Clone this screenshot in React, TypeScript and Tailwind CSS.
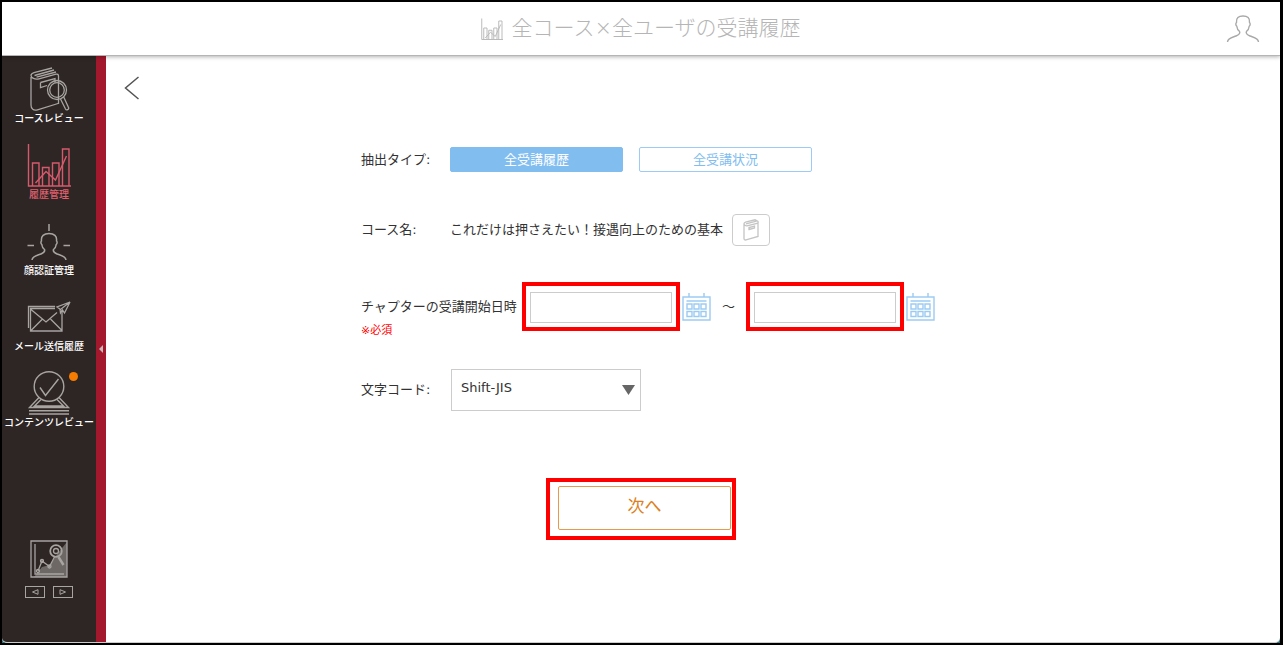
import { useState } from "react";

const CourseReviewIcon = () => (
  <svg width="44" height="44" viewBox="0 0 44 44" fill="none" stroke="#a8a4a2" strokeWidth="1.3">
    <path d="M4 10V38c0 4 2.500 6 6.500 4.800L31 36.500M31.500 9v28M31.500 9c0-1.500-1-2.200-2.500-1.800L12 11.800c-4 1-8-.8-8-3.300 0-1.500 1.500-2.300 3-2.800L25 1M7.500 8.500 27 3M9.500 10.200 29 5" />
    <path d="M13.500 15.500 28 11.500v4M13.500 15.500v5L20 18.500" />
    <circle cx="30" cy="23" r="9.500" />
    <circle cx="30" cy="23" r="7.300" />
    <path d="m33.500 32 5 10c1 1.800 3.800.6 3-1.500l-5-11" />
  </svg>
);

const ChartIcon = ({ size, color }: { size: number; color: string }) => (
  <svg width={size} height={size} viewBox="0 0 44 44" fill="none" stroke={color} strokeWidth={size > 30 ? 1.4 : 2}>
    <path d="M1.500 1v42H44M5.500 43V20h6.500v23M15.500 43V24.500h6.500V43M25.500 43V20h6.500v23M35.500 43V6H42v37" />
    <path d="m8.500 40 10.500-11.500 9.500 8.500L39.500 13" />
  </svg>
);

const FaceAuthIcon = () => (
  <svg width="44" height="44" viewBox="0 0 44 44" fill="none" stroke="#a8a4a2" strokeWidth="1.500">
    <path d="M22 5v7M.5 26.500H7M36.500 26.500H43" />
    <path d="M5 41c.5-4 5-4.500 9-6 3-1.200 4-3 3.500-4.500-1.500-1-2.500-3-2.700-5-1.300-1-1-3-.3-3.500-.7-5 2.500-7.500 7.500-7.500s8.200 2.500 7.500 7.500c.7.500 1 2.500-.3 3.500-.2 2-1.200 4-2.700 5-.5 1.500.5 3.300 3.500 4.500 4 1.500 8.500 2 9 6" />
  </svg>
);

const MailIcon = () => (
  <svg width="44" height="44" viewBox="0 0 44 44" fill="none" stroke="#a8a4a2" strokeWidth="1.300">
    <path d="M28 11.500H1.500V33M28 13.500H3.500V36H35V15M4 14.500l15 12.500 11-9.500M4 35.500l11.500-11.500M35 35.500 23.500 24" />
    <path d="M43 7 30 12l3.500 2.500L43 7l-5.500 11-2-3-2 3-.5-4" />
  </svg>
);

const ContentReviewIcon = () => (
  <svg width="44" height="44" viewBox="0 0 44 44" fill="none" stroke="#a8a4a2" strokeWidth="1.400">
    <circle cx="22" cy="15.500" r="14.800" />
    <path d="m13 16.500 5.500 8L31.500 8M12 26.500 2.500 36.500h39L32 26.500M14 28.500l-6.500 6.500h29L30 28.500M2 39.800h40M2 43h40" />
  </svg>
);

const UserIcon = () => (
  <svg width="34" height="28" viewBox="0 0 34 28" fill="none" stroke="#a9a9a9" strokeWidth="1.400">
    <path d="M1.500 27c.3-4 4.500-4.500 8.500-6 3-1.200 4.500-3 3.500-4.700-1.700-1-2.500-3-2.700-5-1.300-1-1.200-3-.3-3.800C10 3 12.500 1 17 1s7 2 6.500 6.500c.9.800 1 2.800-.3 3.800-.2 2-1 4-2.700 5-1 1.700.5 3.500 3.500 4.700 4 1.500 8.200 2 8.500 6" />
  </svg>
);

const ReportIcon = () => (
  <svg width="38" height="38" viewBox="0 0 38 38" fill="none" stroke="#a8a4a2" strokeWidth="1.300">
    <path d="M37 2v35H4L12 27l8-2 8-12z" fill="#6d6866" stroke="none" />
    <path d="M1 1h36v36H1z" />
    <path d="M5 4v30h29" />
    <path d="M8 31 12 21l7.500 5.500L25 16" />
    <circle cx="8" cy="31" r="1.500" />
    <circle cx="12" cy="21" r="1.500" />
    <circle cx="19.500" cy="26.500" r="1.500" />
    <circle cx="26" cy="11" r="5.800" strokeWidth="1.800" />
    <circle cx="26" cy="11" r="2.500" />
    <path d="m28.500 17 5 8" strokeWidth="2.500" />
  </svg>
);

const BookIcon = () => (
  <svg width="16" height="22" viewBox="0 0 16 22" fill="none" stroke="#c4c4c4" strokeWidth="1.300">
    <path d="M1 5v14.500c0 1.200.8 1.700 2 1.400l12-3.400V4L4 6.800C2.500 7 1 6 1 4.800c0-.8.6-1.400 1.500-1.700L12 .8l3 1.700V4M3 4.800 13.500 2.200M6 10.500l5.500-1.500V7L6 8.500z" />
  </svg>
);

const CalendarIcon = () => (
  <svg width="29" height="29" viewBox="0 0 29 29" fill="none" stroke="#9ccbf2" strokeWidth="1.400">
    <path d="M1 5h27v23H1zM7 1v4M22 1v4M4.500 9h20" />
    <path d="M5 12h5v5H5zM12 12h5v5h-5zM19 12h5v5h-5zM5 19.500h5v5H5zM12 19.500h5v5h-5zM19 19.500h5v5h-5z" />
  </svg>
);

const menu = [
  { label: "コースレビュー", icon: <CourseReviewIcon /> },
  { label: "履歴管理", icon: <ChartIcon size={44} color="#d65a6c" />, active: true },
  { label: "顔認証管理", icon: <FaceAuthIcon /> },
  { label: "メール送信履歴", icon: <MailIcon /> },
  { label: "コンテンツレビュー", icon: <ContentReviewIcon />, badge: true },
];

const types = ["全受講履歴", "全受講状況"];

const Sidebar = () => {
  return (
    <aside className="flex shrink-0 bg-[#2e2625]">
      <div className="flex w-[94px] flex-col items-center pt-[11px] pb-11">
        <nav className="flex flex-col gap-4">
          {menu.map((item) => (
            <a
              key={item.label}
              href="#"
              className={`relative flex flex-col items-center text-[10px] leading-4 font-medium whitespace-nowrap ${
                item.active ? "text-[#e0606f]" : "text-white"
              }`}
            >
              {item.icon}
              {item.label}
              {item.badge && (
                <span className="absolute top-px right-4 size-[9px] rounded-full bg-[#f57c00]" />
              )}
            </a>
          ))}
        </nav>

        <div className="mt-auto flex flex-col items-center gap-2">
          <ReportIcon />
          <div className="flex gap-2">
            <button
              aria-label="前へ"
              className="flex h-3 w-5 items-center justify-center border border-[#a8a4a2]"
            >
              <svg width="8" height="6" viewBox="0 0 8 6" fill="none" stroke="#a8a4a2">
                <path d="M7 .7v4.600L1.500 3z" />
              </svg>
            </button>
            <button
              aria-label="次のページ"
              className="flex h-3 w-5 items-center justify-center border border-[#a8a4a2]"
            >
              <svg width="8" height="6" viewBox="0 0 8 6" fill="none" stroke="#a8a4a2">
                <path d="M1 .7v4.600L6.500 3z" />
              </svg>
            </button>
          </div>
        </div>
      </div>
      <button
        aria-label="メニューを閉じる"
        className="flex w-[10px] items-center justify-center bg-[#a3182d]"
      >
        <svg width="4" height="8" viewBox="0 0 4 8" fill="#c9b8b8">
          <path d="M4 0v8L0 4z" />
        </svg>
      </button>
    </aside>
  );
};

const DateField = ({ id, label }: { id: string; label: string }) => {
  return (
    <div className="flex shrink-0 items-center gap-[2px]">
      <div className="border-4 border-[#fe0000] px-1 pt-[6px] pb-1">
        <input
          id={id}
          type="text"
          aria-label={label}
          className="block h-[31px] w-[142px] border border-[#ccc] px-2 outline-none"
        />
      </div>
      <button type="button" aria-label={`${label}を選択`}>
        <CalendarIcon />
      </button>
    </div>
  );
};

const HistoryForm = () => {
  const [type, setType] = useState(types[0]);

  return (
    <form
      className="mx-auto mt-[47px] w-[560px] text-[13px] leading-5 text-[#333]"
      onSubmit={(e) => e.preventDefault()}
    >
      {/* Type */}
      <div className="flex items-center">
        <span className="w-[89px]">抽出タイプ:</span>
        <div className="flex gap-4">
          {types.map((t) => (
            <button
              key={t}
              type="button"
              onClick={() => setType(t)}
              className={`h-[25px] w-[173px] rounded-[2px] border leading-none ${
                t === type
                  ? "border-[#82bdf0] bg-[#82bdf0] text-white"
                  : "border-[#9ccbf5] bg-white text-[#82bdf0]"
              }`}
            >
              {t}
            </button>
          ))}
        </div>
      </div>

      {/* Course */}
      <div className="mt-[42px] flex items-center">
        <span className="w-[89px]">コース名:</span>
        <span className="w-[282px] whitespace-nowrap">これだけは押さえたい！接遇向上のための基本</span>
        <button
          type="button"
          aria-label="コースを選択"
          className="flex h-8 w-[38px] items-center justify-center rounded-[4px] border border-[#ccc]"
        >
          <BookIcon />
        </button>
      </div>

      {/* Period */}
      <div className="mt-9 flex items-center">
        <label htmlFor="from" className="w-[161px] shrink-0 whitespace-nowrap">
          チャプターの受講開始日時
        </label>
        <DateField id="from" label="開始日" />
        <span className="w-[35px] shrink-0 text-center">～</span>
        <DateField id="to" label="終了日" />
      </div>
      <p className="-mt-[10px] text-[11px] text-[#f00]">※必須</p>

      {/* Encoding */}
      <div className="mt-7 flex items-center">
        <label htmlFor="encoding" className="w-[90px]">
          文字コード:
        </label>
        <div className="relative">
          <select
            id="encoding"
            className="block h-[42px] w-[190px] appearance-none border border-[#ccc] bg-white px-[9px] pb-1 outline-none"
          >
            <option>Shift-JIS</option>
            <option>UTF-8</option>
          </select>
          <svg
            className="pointer-events-none absolute top-4 right-[6px]"
            width="13"
            height="10"
            viewBox="0 0 13 10"
            fill="#666"
          >
            <path d="M0 0h13L6.500 10z" />
          </svg>
        </div>
      </div>

      <div className="mx-auto mt-[67px] w-[190px] border-4 border-[#fe0000] pt-1 pr-px pb-[6px] pl-2">
        <button
          type="submit"
          className="h-11 w-full rounded-[2px] border border-[#e8994a] pb-1 text-[17px] text-[#dd8020]"
        >
          次へ
        </button>
      </div>
    </form>
  );
};

const App = () => {
  return (
    <div className="flex min-h-screen flex-col border-2 border-r-[3px] border-black bg-[#28727a] font-['DejaVu_Sans','Noto_Sans_CJK_JP',sans-serif]">
      <header className="z-10 flex h-[54px] items-center border-b border-[#b5b5b5] bg-white px-5 shadow-[0_1px_4px_rgba(0,0,0,0.3)]">
        <div className="w-[34px]" />
        <h1 className="flex flex-1 items-center justify-center gap-2 text-[21px] font-light text-[#b5b5b5]">
          <ChartIcon size={22} color="#bbb" />
          全コース×全ユーザの受講履歴
        </h1>
        <button aria-label="ユーザー">
          <UserIcon />
        </button>
      </header>

      <div className="flex flex-1 overflow-hidden rounded-b-[5px] border-b border-[#ccc] bg-white">
        <Sidebar />
        <main className="flex-1 pr-[104px] pb-10">
          <button aria-label="戻る" className="mt-5 ml-[18px] block">
            <svg width="16" height="24" viewBox="0 0 16 24" fill="none" stroke="#555" strokeWidth="1.500">
              <path d="M14.500 1 1.500 12l13 11" />
            </svg>
          </button>
          <HistoryForm />
        </main>
      </div>
    </div>
  );
};

export default App;
